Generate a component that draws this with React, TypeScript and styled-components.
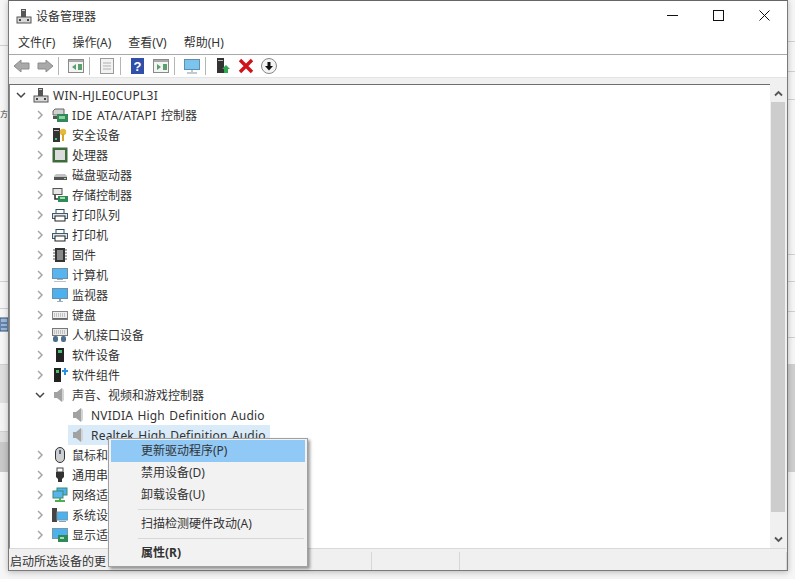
import React from "react";
import styled, { createGlobalStyle } from "styled-components";

const Global = createGlobalStyle`
  html, body { margin: 0; padding: 0; background: #fff; }
  #root { width: 795px; height: 579px; overflow: hidden; }
`;

const Page = styled.div`
  position: relative;
  width: 795px;
  height: 579px;
  display: flex;
  background: #f4f4f4;
  font-family: "Noto Sans", "Noto Sans CJK SC", sans-serif;
  font-size: 12px;
  color: #333;
  overflow: hidden;
`;
const Backdrop = styled.div<{ $w: number }>`
  width: ${(p) => p.$w}px;
  height: 579px;
  flex: none;
  display: flex;
  flex-direction: column;
  overflow: hidden;
  background: #f6f6f6;
`;
const Band = styled.div<{ $h: number; $bg?: string; $line?: boolean }>`
  height: ${(p) => p.$h}px;
  flex: none;
  box-sizing: border-box;
  background: ${(p) => p.$bg ?? "transparent"};
  border-bottom: ${(p) => (p.$line ? "1px solid #d0d0d0" : "none")};
  display: flex;
  align-items: center;
  overflow: hidden;
  white-space: nowrap;
  font-size: 8px;
  line-height: 10px;
  color: #444;
`;
const Win = styled.div`
  position: relative;
  z-index: 1;
  width: 780px;
  height: 571px;
  box-sizing: border-box;
  flex: none;
  border: 1px solid #7a7a7a;
  border-top-color: #666;
  background: #f0f0f0;
  display: flex;
  flex-direction: column;
  box-shadow: 0 1px 6px rgba(0, 0, 0, 0.25);
`;
const TitleBar = styled.div`
  height: 29px;
  flex: none;
  display: flex;
  align-items: center;
  background: #fff;
  padding-left: 7px;
  font-size: 12px;
  color: #333;
`;
const Title = styled.span`
  flex: 1;
  margin-left: 4px;
`;
const WinBtn = styled.div`
  width: 46px;
  height: 29px;
  display: flex;
  align-items: center;
  justify-content: center;
`;
const Menu = styled.div`
  height: 24px;
  flex: none;
  display: flex;
  align-items: center;
  background: #fff;
  padding-left: 9px;
  gap: 17px;
  border-bottom: 1px solid #a9a9a9;
`;
const Toolbar = styled.div`
  height: 22px;
  flex: none;
  display: flex;
  align-items: center;
  background: #fff;
  padding-left: 1px;
  border-bottom: 1px solid #e4e4e4;
`;
const ToolIcon = styled.div`
  width: 23px;
  height: 22px;
  flex: none;
  display: flex;
  align-items: center;
  justify-content: center;
`;
const Sep = styled.div`
  width: 1px;
  height: 18px;
  flex: none;
  background: #b5b5b5;
  margin: 0 5px 0 2px;
`;
const Body = styled.div`
  flex: 1;
  min-height: 0;
  margin: 6px 1px 0 0;
  display: flex;
  background: #fff;
  border-top: 1px solid #6e6e6e;
  border-left: 1px solid #8a8a8a;
  border-bottom: 1px solid #d9d9d9;
`;
const Tree = styled.div`
  flex: 1;
  overflow: hidden;
`;
const Row = styled.div<{ $depth: number }>`
  height: 20px;
  display: flex;
  align-items: center;
  padding-left: ${(p) => 5 + p.$depth * 19}px;
  white-space: nowrap;
`;
const Chevron = styled.div`
  width: 12px;
  height: 20px;
  display: flex;
  align-items: center;
  justify-content: center;
  margin-right: 6px;
  flex: none;
`;
const RowIcon = styled.div`
  width: 16px;
  height: 16px;
  display: flex;
  align-items: center;
  justify-content: center;
  margin-right: 4px;
  flex: none;
`;
const Latin = styled.span<{ $track: number }>`
  letter-spacing: ${(p) => p.$track}px;
  word-spacing: 1px;
`;
const Selected = styled.div`
  display: flex;
  align-items: center;
  height: 20px;
  margin-left: -3px;
  padding: 0 4px 0 3px;
  background: #d9ebf9;
`;
const ScrollBar = styled.div`
  width: 16px;
  margin-top: -1px;
  background: #f0f0f0;
  display: flex;
  flex-direction: column;
  flex: none;
`;
const ScrollBtn = styled.div`
  height: 18px;
  display: flex;
  align-items: center;
  justify-content: center;
  flex: none;
`;
const Track = styled.div`
  flex: 1;
  display: flex;
`;
const Thumb = styled.div`
  flex: 1;
  margin: 0 1px 18px;
  background: #cdcdcd;
`;
const Status = styled.div`
  height: 21px;
  flex: none;
  display: flex;
  background: #f0f0f0;
`;
const StatusCell = styled.div<{ $w?: number }>`
  ${(p) => (p.$w ? `width: ${p.$w}px; flex: none;` : "flex: 1;")}
  box-sizing: border-box;
  display: flex;
  align-items: center;
  padding-left: 1px;
  margin-top: 3px;
  border-right: 1px solid #d7d7d7;
`;
const Ctx = styled.div`
  position: absolute;
  z-index: 2;
  left: 108px;
  top: 438px;
  width: 200px;
  height: 129px;
  box-sizing: border-box;
  border: 1px solid #a0a0a0;
  background: #f2f2f2;
  padding: 1px 2px;
  box-shadow: 2px 2px 3px rgba(0, 0, 0, 0.4);
`;
const CtxItem = styled.div<{ $active?: boolean; $bold?: boolean }>`
  height: 22px;
  box-sizing: border-box;
  display: flex;
  align-items: center;
  padding: 0 0 2px 30px;
  background: ${(p) => (p.$active ? "#90c8f6" : "transparent")};
  font-weight: ${(p) => (p.$bold ? 700 : 400)};
`;
const CtxSep = styled.div`
  height: 1px;
  background: #d7d7d7;
  margin: 3px 1px 3px 27px;
`;

const Chev = ({ open }: { open?: boolean }) => (
  <svg width="10" height="10" viewBox="0 0 10 10">
    <path
      d={open ? "M1 3l4 4 4-4" : "M3 1l4 4-4 4"}
      fill="none"
      stroke={open ? "#444" : "#a6a6a6"}
      strokeWidth="1.5"
    />
  </svg>
);

const S = ({ children }: { children: React.ReactNode }) => (
  <svg width="16" height="16" viewBox="0 0 16 16">
    {children}
  </svg>
);

const PcIcon = () => (
  <S>
    <rect x="5" y="1" width="5" height="8" fill="#555" />
    <rect x="6" y="2" width="3" height="1" fill="#ccc" />
    <rect x="1" y="9" width="14" height="6" fill="#d8d8d8" stroke="#555" />
    <rect x="3" y="11" width="2" height="2" fill="#444" />
    <rect x="11" y="11" width="2" height="2" fill="#444" />
  </S>
);
const icons: Record<string, React.ReactNode> = {
  ide: (
    <S>
      <path d="M1 4l2-2h9v6H1z" fill="#d0d0d0" stroke="#666" />
      <rect x="5" y="7" width="11" height="8" fill="#2e8b57" />
      <rect x="7" y="9" width="6" height="3" fill="#8fd0a0" />
      <rect x="1" y="9" width="4" height="3" fill="#555" />
    </S>
  ),
  sec: (
    <S>
      <rect x="1" y="1" width="7" height="14" fill="#333" />
      <rect x="2" y="3" width="5" height="1" fill="#bbb" />
      <rect x="3" y="11" width="2" height="2" fill="#46c06a" />
      <circle cx="11" cy="5" r="3.2" fill="#e6b93a" />
      <rect x="10" y="7" width="2" height="7" fill="#d6a52a" />
    </S>
  ),
  cpu: (
    <S>
      <rect x="0.5" y="0.5" width="15" height="15" fill="#3f6a3a" />
      <rect x="3" y="3" width="10" height="10" fill="#dcdcdc" />
    </S>
  ),
  disk: (
    <S>
      <path d="M2 9L4 7H13L15 9V13H2Z" fill="#c2c2c2" />
      <rect x="2" y="10" width="13" height="3" fill="#555" />
      <rect x="12" y="11" width="2" height="1" fill="#9ee29e" />
    </S>
  ),
  storage: (
    <S>
      <rect x="1" y="1.5" width="9" height="6" fill="#e6e6e6" stroke="#555" />
      <path d="M3 8v4h4" fill="none" stroke="#333" strokeWidth="1.6" />
      <rect x="6" y="9" width="10" height="6" fill="#2e8b57" />
      <rect x="8" y="10" width="5" height="2" fill="#a4dcb0" />
    </S>
  ),
  print: (
    <S>
      <rect x="4" y="2.5" width="8" height="4" fill="#fff" stroke="#2f4f63" />
      <rect x="0.5" y="6.5" width="15" height="5" fill="#dfe6ea" stroke="#3d5a6e" />
      <rect x="3" y="9" width="10" height="5" fill="#fff" stroke="#222" />
    </S>
  ),
  fw: (
    <S>
      <rect x="3" y="1" width="10" height="14" fill="#333" />
      <rect x="5" y="3" width="6" height="10" fill="#888" />
      <path d="M1 3h2M1 6h2M1 9h2M1 12h2M13 3h2M13 6h2M13 9h2M13 12h2" stroke="#555" />
    </S>
  ),
  pc: (
    <S>
      <rect x="0.5" y="1.5" width="15" height="10" fill="#58b4ee" stroke="#6f8ea5" />
      <rect x="5" y="12" width="6" height="1" fill="#9ab0c0" />
      <rect x="2" y="14" width="12" height="1" fill="#b5c3cc" />
    </S>
  ),
  mon: (
    <S>
      <rect x="0.5" y="1.5" width="15" height="10" fill="#4db1ee" stroke="#6f8ea5" />
      <rect x="7" y="12" width="2" height="2" fill="#8aa0b0" />
      <rect x="5" y="14" width="6" height="1" fill="#9ab0c0" />
    </S>
  ),
  kb: (
    <S>
      <rect x="0.5" y="4.5" width="15" height="8" fill="#eee" stroke="#888" />
      <path d="M2 7h12M2 9h12" stroke="#999" strokeDasharray="1 1" />
      <rect x="1" y="11" width="14" height="1.5" fill="#666" />
    </S>
  ),
  hid: (
    <S>
      <rect x="0.5" y="1.5" width="15" height="7" fill="#e8e8e8" stroke="#777" />
      <path d="M2 4h12M2 6h12" stroke="#999" strokeDasharray="1 1" />
      <rect x="1" y="9" width="5" height="6" rx="2" fill="#4b6f8a" />
      <rect x="9" y="9" width="5" height="6" rx="2" fill="#4b6f8a" />
    </S>
  ),
  swd: (
    <S>
      <rect x="4" y="1" width="8" height="14" fill="#222" />
      <rect x="6" y="3" width="4" height="3" fill="#46c06a" />
    </S>
  ),
  swc: (
    <S>
      <rect x="2" y="1" width="7" height="14" fill="#222" />
      <rect x="4" y="3" width="3" height="3" fill="#46c06a" />
      <path d="M10 3h2V1h2v2h2v2h-2v3h-2V5h-2z" fill="#2f8fe0" />
    </S>
  ),
  snd: (
    <S>
      <path d="M2 5h3l5-4v14l-5-4H2z" fill="#a2a2a2" />
      <path d="M10 1v14l2-2V3z" fill="#d4d4d4" />
    </S>
  ),
  mouse: (
    <S>
      <rect x="3.5" y="0.5" width="9" height="15" rx="4.5" fill="#cfcfcf" stroke="#333" />
      <rect x="7" y="3" width="2" height="4" fill="#4a6a85" />
    </S>
  ),
  usb: (
    <S>
      <rect x="5" y="1" width="6" height="4" fill="#fff" stroke="#444" />
      <path d="M4 5h8v5l-2 2v3H6v-3L4 10z" fill="#333" />
    </S>
  ),
  net: (
    <S>
      <rect x="5" y="1" width="10" height="7" fill="#4db1ee" stroke="#3b8a6b" />
      <rect x="1" y="4" width="10" height="7" fill="#58b4ee" stroke="#3b8a6b" />
      <rect x="3" y="13" width="10" height="2" fill="#4caf50" />
      <rect x="7" y="11" width="2" height="2" fill="#4caf50" />
    </S>
  ),
  sys: (
    <S>
      <rect x="0" y="1" width="5" height="14" fill="#444" />
      <rect x="5" y="5" width="11" height="8" fill="#4db1ee" stroke="#7d95a5" />
      <rect x="7" y="14" width="7" height="1" fill="#8aa0b0" />
    </S>
  ),
  disp: (
    <S>
      <rect x="0.5" y="1.5" width="15" height="10" fill="#4db1ee" stroke="#7d95a5" />
      <rect x="6" y="8" width="10" height="7" fill="#2e8b57" />
      <rect x="8" y="10" width="4" height="2" fill="#a4dcb0" />
    </S>
  ),
};

const cats: [string, string][] = [
  ["sec", "安全设备"],
  ["cpu", "处理器"],
  ["disk", "磁盘驱动器"],
  ["storage", "存储控制器"],
  ["print", "打印队列"],
  ["print", "打印机"],
  ["fw", "固件"],
  ["pc", "计算机"],
  ["mon", "监视器"],
  ["kb", "键盘"],
  ["hid", "人机接口设备"],
  ["swd", "软件设备"],
  ["swc", "软件组件"],
];
const cats2: [string, string][] = [
  ["mouse", "鼠标和"],
  ["usb", "通用串"],
  ["net", "网络适"],
  ["sys", "系统设"],
  ["disp", "显示适"],
];

const Cat = ({ icon, label, open }: { icon: string; label: React.ReactNode; open?: boolean }) => (
  <Row $depth={1}>
    <Chevron>
      <Chev open={open} />
    </Chevron>
    <RowIcon>{icons[icon]}</RowIcon>
    <span>{label}</span>
  </Row>
);

const Btn = ({ children }: { children: React.ReactNode }) => (
  <ToolIcon>
    <svg width="18" height="18" viewBox="0 0 18 18">
      {children}
    </svg>
  </ToolIcon>
);

const Pane = ({ accent }: { accent: React.ReactNode }) => (
  <>
    <rect x="1.5" y="2.5" width="15" height="13" fill="#f4f4f4" stroke="#8a8a8a" />
    <rect x="2" y="3" width="14" height="2" fill="#a9a9a9" />
    {accent}
  </>
);

export default function App() {
  return (
    <Page>
      <Global />
      <Backdrop $w={8}>
        <Band $h={46} $line />
        <Band $h={60} />
        <Band $h={16}>方</Band>
        <Band $h={160} $line />
        <Band $h={27} $line />
        <Band $h={8} />
        <Band $h={16}>
          <svg width="8" height="16" viewBox="0 0 8 16">
            <rect x="0" y="1" width="8" height="13" fill="#9db8d8" stroke="#2f4f7a" />
            <path d="M1 6h6M1 10h6" stroke="#2f4f7a" />
          </svg>
        </Band>
        <Band $h={32} $line />
        <Band $h={38} $bg="#dedede" />
        <Band $h={29} $bg="#f3f3f3" $line />
        <Band $h={10} $bg="#dedede" />
        <Band $h={30} $bg="#c8c8c8" />
      </Backdrop>
      <Win>
        <TitleBar>
          <PcIcon />
          <Title>设备管理器</Title>
          <WinBtn>
            <svg width="11" height="11" viewBox="0 0 11 11">
              <path d="M0 5.5h11" stroke="#111" />
            </svg>
          </WinBtn>
          <WinBtn>
            <svg width="11" height="11" viewBox="0 0 11 11">
              <rect x="0.5" y="0.5" width="10" height="10" fill="none" stroke="#111" />
            </svg>
          </WinBtn>
          <WinBtn>
            <svg width="11" height="11" viewBox="0 0 11 11">
              <path d="M0.5 0.5l10 10M10.5 0.5l-10 10" stroke="#111" />
            </svg>
          </WinBtn>
        </TitleBar>
        <Menu>
          <span>文件(F)</span>
          <span>操作(A)</span>
          <span>查看(V)</span>
          <span>帮助(H)</span>
        </Menu>
        <Toolbar>
          <Btn>
            <path d="M1 9l7-6v3h8v6H8v3z" fill="#a9a9a9" stroke="#8c8c8c" />
          </Btn>
          <Btn>
            <path d="M17 9l-7-6v3H2v6h8v3z" fill="#a9a9a9" stroke="#8c8c8c" />
          </Btn>
          <Sep />
          <Btn>
            <Pane accent={<path d="M9 7l-4 3 4 3z M11 7h4v6h-4z" fill="#5aa06a" />} />
          </Btn>
          <Sep />
          <Btn>
            <rect x="2.5" y="1.5" width="13" height="15" fill="#f2f2f2" stroke="#9a9a9a" />
            <path d="M5 6h8M5 9h8M5 12h8" stroke="#b0b0b0" />
          </Btn>
          <Sep />
          <Btn>
            <rect x="2" y="1" width="13" height="16" fill="#2f4fa8" />
            <text x="8.5" y="14" fontSize="13" fontWeight="700" fill="#fff" textAnchor="middle" fontFamily="Liberation Sans">
              ?
            </text>
          </Btn>
          <Btn>
            <Pane accent={<path d="M5 7l4 3-4 3z M11 7h4v6h-4z" fill="#5aa06a" />} />
          </Btn>
          <Sep />
          <Btn>
            <rect x="1.5" y="2.5" width="15" height="10" fill="#7cc4ee" stroke="#5f8fb0" />
            <path d="M9 13v2M4 16h10" stroke="#7f97a8" />
          </Btn>
          <Sep />
          <Btn>
            <rect x="3" y="1" width="7" height="15" fill="#333" />
            <rect x="4" y="3" width="5" height="1" fill="#bbb" />
            <path d="M12 8l4 4h-2v4h-4v-4H8z" fill="#2fa84f" />
          </Btn>
          <Btn>
            <path d="M3 3l12 12M15 3L3 15" stroke="#d0121b" strokeWidth="3.4" />
          </Btn>
          <Btn>
            <circle cx="9" cy="9" r="7.5" fill="#f4f4f4" stroke="#888" />
            <path d="M9 13.5L5 9h2.5V5h3v4H13z" fill="#111" />
          </Btn>
        </Toolbar>
        <Body>
          <Tree>
            <Row $depth={0}>
              <Chevron>
                <Chev open />
              </Chevron>
              <RowIcon>
                <PcIcon />
              </RowIcon>
              <Latin $track={0.27}>WIN-HJLE0CUPL3I</Latin>
            </Row>
            <Cat
              icon="ide"
              label={
                <>
                  <Latin $track={0.35}>IDE ATA/ATAPI </Latin>控制器
                </>
              }
            />
            {cats.map(([i, l]) => (
              <Cat key={l} icon={i} label={l} />
            ))}
            <Cat icon="snd" label="声音、视频和游戏控制器" open />
            <Row $depth={2}>
              <Chevron />
              <RowIcon>{icons.snd}</RowIcon>
              <Latin $track={0.2}>NVIDIA High Definition Audio</Latin>
            </Row>
            <Row $depth={2}>
              <Chevron />
              <Selected>
                <RowIcon>{icons.snd}</RowIcon>
                <Latin $track={0.2}>Realtek High Definition Audio</Latin>
              </Selected>
            </Row>
            {cats2.map(([i, l]) => (
              <Cat key={l} icon={i} label={l} />
            ))}
          </Tree>
          <ScrollBar>
            <ScrollBtn>
              <svg width="9" height="7" viewBox="0 0 9 7">
                <path d="M1 5.5l3.5-3.5L8 5.5" fill="none" stroke="#555" strokeWidth="1.8" />
              </svg>
            </ScrollBtn>
            <Track>
              <Thumb />
            </Track>
            <ScrollBtn>
              <svg width="9" height="7" viewBox="0 0 9 7">
                <path d="M1 1.5L4.5 5 8 1.5" fill="none" stroke="#555" strokeWidth="1.8" />
              </svg>
            </ScrollBtn>
          </ScrollBar>
        </Body>
        <Status>
          <StatusCell $w={363}>启动所选设备的更</StatusCell>
          <StatusCell $w={88} />
          <StatusCell />
        </Status>
      </Win>
      <Backdrop $w={7}>
        <Band $h={42} $line />
        <Band $h={30} $line />
        <Band $h={28} $line />
        <Band $h={155} $line />
        <Band $h={27} $line />
        <Band $h={30} $line />
        <Band $h={26} $line />
        <Band $h={27} $line />
        <Band $h={107} $bg="#cfcfcf" />
      </Backdrop>
      <Ctx>
        <CtxItem $active>更新驱动程序(P)</CtxItem>
        <CtxItem>禁用设备(D)</CtxItem>
        <CtxItem>卸载设备(U)</CtxItem>
        <CtxSep />
        <CtxItem>扫描检测硬件改动(A)</CtxItem>
        <CtxSep />
        <CtxItem $bold>属性(R)</CtxItem>
      </Ctx>
    </Page>
  );
}
